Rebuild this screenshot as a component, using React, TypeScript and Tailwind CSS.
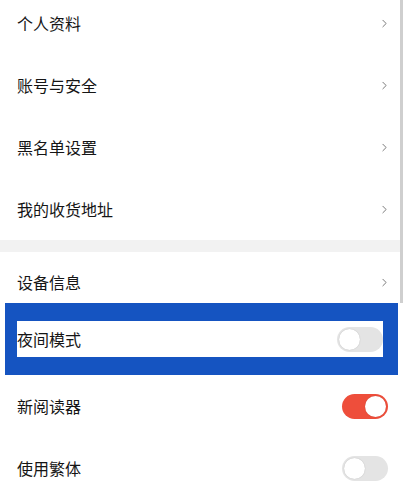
import { ChevronRight } from 'lucide-react';

const FONT = { fontFamily: '"Noto Sans CJK SC", "Noto Sans", sans-serif' };

function LinkRow({ label, className = 'h-[62px]' }: { label: string; className?: string }) {
  return (
    <div className={`flex items-center justify-between pl-[17px] pr-[12px] ${className}`}>
      <span className="text-[16px] text-[#151515]">{label}</span>
      <ChevronRight className="w-[13px] h-[13px] text-[#5c5c5c]" strokeWidth={1.5} />
    </div>
  );
}

function Toggle({ on }: { on: boolean }) {
  return (
    <div
      className={`flex items-center w-[46px] h-[25px] rounded-full p-[2px] ${
        on ? 'bg-[#ee4e3b] justify-end' : 'bg-[#e4e4e4] justify-start'
      }`}
    >
      <div className="w-[21px] h-[21px] rounded-full bg-white shadow-[0_0_1px_rgba(0,0,0,0.25)]" />
    </div>
  );
}

function ToggleRow({ label, on }: { label: string; on: boolean }) {
  return (
    <div className="flex items-center justify-between h-[62px] pl-[17px] pr-[15px]">
      <span className="text-[16px] text-[#151515]">{label}</span>
      <Toggle on={on} />
    </div>
  );
}

export default function App() {
  return (
    <div className="relative w-[403px] h-[495px] overflow-hidden bg-white" style={FONT}>
      {/* scrollbar */}
      <div className="absolute right-0 top-0 w-[3px] h-[303px] bg-[#cfcfcf]" />

      <div className="-mt-[8px]">
        <LinkRow label="个人资料" />
        <LinkRow label="账号与安全" />
        <LinkRow label="黑名单设置" />
        <LinkRow label="我的收货地址" className="h-[62px]" />
      </div>

      <div className="h-[12px] bg-[#f2f2f2] mr-[3px]" />

      <LinkRow label="设备信息" className="h-[51px] pt-[9px]" />

      {/* highlighted row */}
      <div className="ml-[5px] w-[393px] h-[72px] bg-[#1554c1] pl-[12px] pr-[15px] py-[18px]">
        <div className="flex items-center justify-between h-[36px] bg-white">
          <span className="text-[16px] text-[#151515]">夜间模式</span>
          <Toggle on={false} />
        </div>
      </div>

      <ToggleRow label="新阅读器" on={true} />
      <ToggleRow label="使用繁体" on={false} />
    </div>
  );
}
